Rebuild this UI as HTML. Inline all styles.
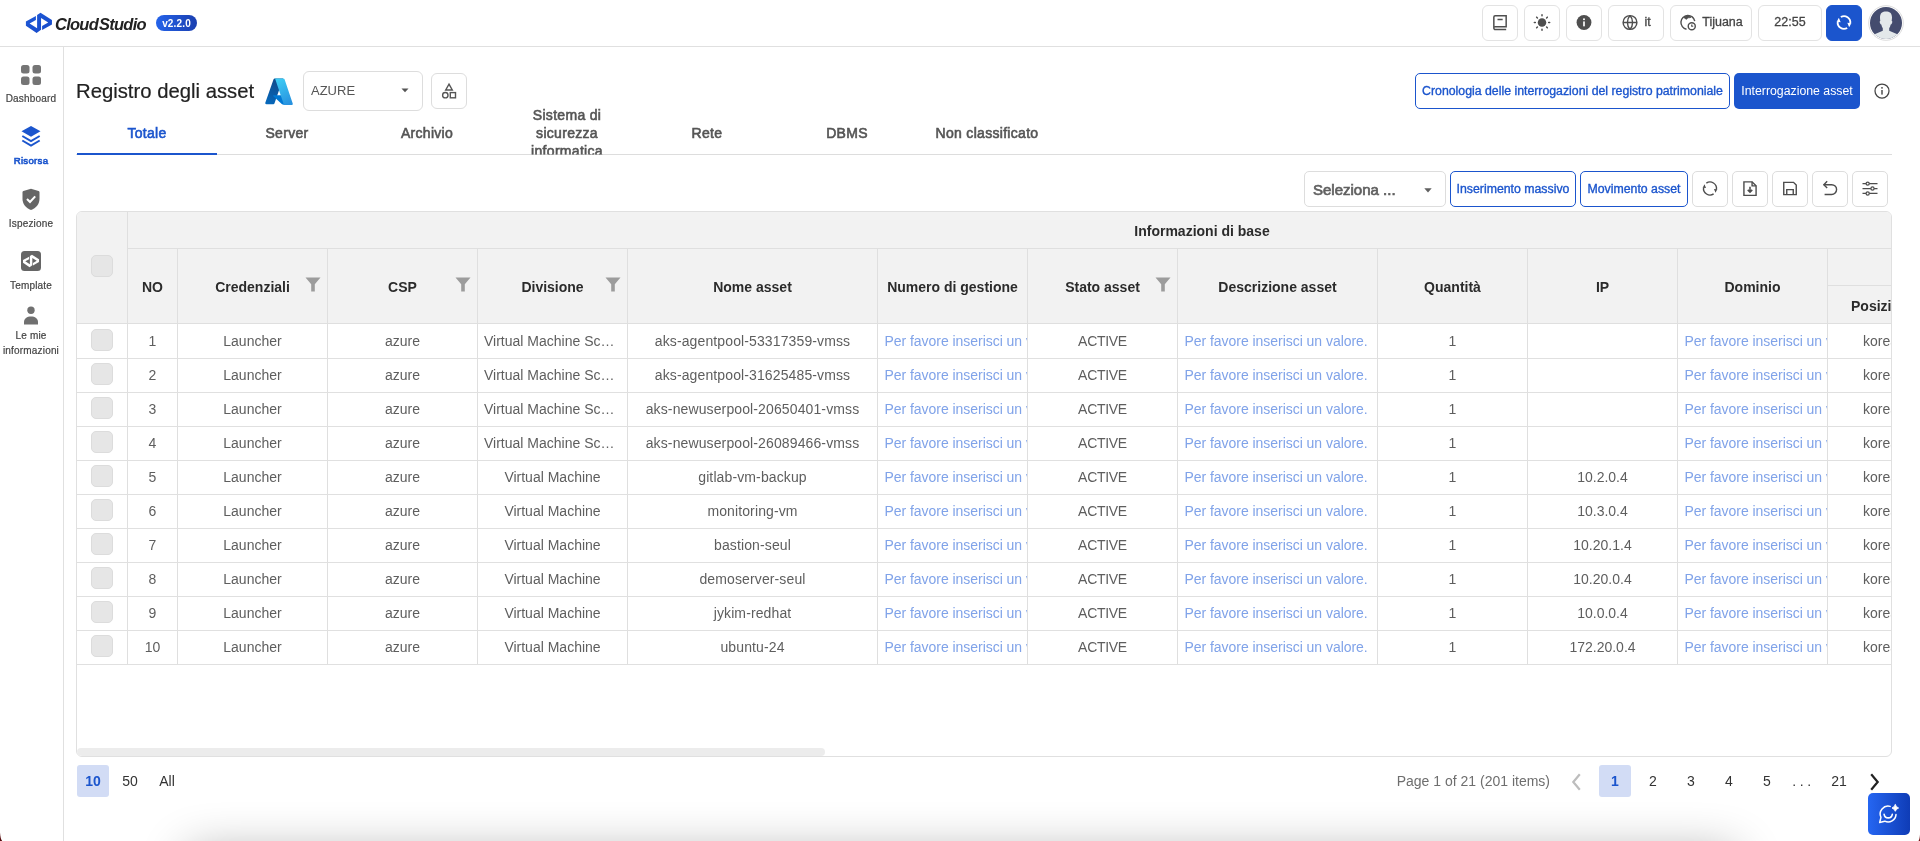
<!DOCTYPE html>
<html lang="it">
<head>
<meta charset="utf-8">
<title>CloudStudio - Registro degli asset</title>
<style>
*{box-sizing:border-box;margin:0;padding:0}
html,body{width:1920px;height:841px;overflow:hidden;background:#fff}
body{font-family:"Liberation Sans",sans-serif;color:#222;position:relative;will-change:transform}
.abs{position:absolute}
#hdr{position:absolute;left:0;top:0;width:1920px;height:47px;border-bottom:1px solid #e0e0e0;background:#fff}
#logo{position:absolute;left:55px;top:13.6px;font-size:16.5px;line-height:20px;font-weight:bold;font-style:italic;color:#222;white-space:nowrap;letter-spacing:-0.75px}
#ver{position:absolute;left:156px;top:15px;width:41px;height:16px;border-radius:8px;background:linear-gradient(90deg,#2463ea,#1a3fb0);color:#fff;font-size:10px;font-weight:bold;text-align:center;line-height:17px;letter-spacing:0.15px}
.hb{position:absolute;top:5px;height:36px;border:1px solid #e3e3e3;border-radius:6px;background:#fff;display:flex;align-items:center;justify-content:center;font-size:12.5px;color:#444;white-space:nowrap}
.hb span{position:relative;top:-1px;-webkit-text-stroke:0.3px currentColor}
.hb svg{transform:translateY(-0.5px)}
#side{position:absolute;left:0;top:47px;width:64px;height:794px;border-right:1px solid #e0e0e0;background:#fff}
.sl{position:absolute;left:0;width:62px;text-align:center;font-size:10px;letter-spacing:0.18px;-webkit-text-stroke:0.2px currentColor;color:#444;line-height:15px;white-space:nowrap}
#title{position:absolute;left:76px;top:78.4px;font-size:20.3px;color:#222;-webkit-text-stroke:0.2px #222;line-height:26px;white-space:nowrap}
.sel{position:absolute;border:1px solid #ddd;background:#fff}
.tab{position:absolute;top:106px;width:140px;height:54px;clip-path:inset(0 0 5.5px 0);text-align:center;font-size:14px;letter-spacing:0.3px;-webkit-text-stroke:0.6px currentColor;color:#555;display:flex;align-items:center;justify-content:center;line-height:18px}
.tb{position:absolute;top:171px;height:36px;border:1px solid #ddd;border-radius:5px;background:#fff;display:flex;align-items:center;justify-content:center}
.tb>svg:not(.abs){transform:translateY(-0.5px)}
.ob{border:1px solid #1b55cd;color:#1b55cd;font-size:12.3px;white-space:nowrap;-webkit-text-stroke:0.35px currentColor}
#grid{position:absolute;left:76px;top:211px;width:1816px;height:546px;border:1px solid #e0e0e0;border-radius:6px;overflow:hidden;background:#fff}
#gh{position:absolute;left:0;top:0;width:1816px;height:112px;background:#f2f2f2}
.vl{position:absolute;width:1px;background:#dfdfdf}
.hl{position:absolute;height:1px;background:#dfdfdf}
.ht{position:absolute;font-weight:bold;font-size:14px;color:#2b2b2b;text-align:center;line-height:18px;white-space:nowrap}
.row{position:absolute;left:0;width:1816px;height:34px;border-bottom:1px solid #e0e0e0}
.c{position:absolute;top:0;height:100%;font-size:14px;color:#5e5e5e;text-align:center;white-space:nowrap;overflow:hidden}
.ph{color:#80a3e9;text-align:left;padding-left:6.5px;letter-spacing:-0.04px}
.cb{position:absolute;left:14px;width:22px;height:22px;border-radius:5px;background:#e6e6e6;border:1px solid #dcdcdc}
.pg{position:absolute;top:765px;height:32px;line-height:32px;border-radius:3px;font-size:14px;color:#333;text-align:center}
</style>
</head>
<body>
<div id="hdr">
<svg class="abs" style="left:0;top:0" width="60" height="46" viewBox="0 0 60 46"><defs><linearGradient id="lg1" x1="0" y1="0" x2="1" y2="1"><stop offset="0" stop-color="#1f5bd8"/><stop offset="1" stop-color="#1748c8"/></linearGradient></defs><path fill="url(#lg1)" d="M25.9 21.4 L35.9 15.9 L35.9 19.95 L29.6 23.4 L37.1 28.15 L37.1 14.95 L40.5 12.8 L51.95 20.1 L51.95 24.4 L42.1 30.1 L42.1 26 L48.2 22.45 L41.05 18 L41.05 29.75 L36.6 33 L25.9 25.65 Z"/></svg>
<div id="logo">Cloud<span style="margin-left:1px">Studio</span></div>
<div id="ver">v2.2.0</div>
<div class="hb" style="left:1482px;width:36px"><svg width="20" height="20" viewBox="0 0 24 24" fill="none" stroke="#4f4f4f" stroke-width="1.800"><path d="M4.600 19.200V5.600A1.600 1.600 0 0 1 6.200 4H19.400v13H6.400A1.700 1.700 0 0 0 4.600 18.700v0A1.700 1.700 0 0 0 6.400 20.400H19.400"/><path d="M9 8.300h6.200" /></svg></div>
<div class="hb" style="left:1524px;width:36px"><svg width="20" height="20" viewBox="0 0 24 24"><circle cx="12" cy="12" r="5.100" fill="#4f4f4f"/><g stroke="#4f4f4f" stroke-width="1.800" stroke-linecap="round"><path d="M12 2.800v1.200M12 20v1.200M2.800 12h1.200M20 12h1.200M5.600 5.600l.9.900M17.500 17.500l.9.900M5.600 18.400l.9-.9M17.500 6.500l.9-.9"/></g></svg></div>
<div class="hb" style="left:1566px;width:36px"><svg width="20" height="20" viewBox="0 0 24 24"><circle cx="12" cy="12" r="8.900" fill="#4f4f4f"/><rect x="11" y="10.700" width="2" height="5.900" fill="#fff"/><circle cx="12" cy="8.100" r="1.200" fill="#fff"/></svg></div>
<div class="hb" style="left:1608px;width:56px"><svg width="18" height="18" viewBox="0 0 24 24" fill="none" stroke="#4f4f4f" stroke-width="1.900"><circle cx="12" cy="12" r="9.200"/><path d="M2.800 12h18.400M12 2.800c-4.600 5-4.600 13.400 0 18.400M12 2.800c4.600 5 4.600 13.400 0 18.400"/></svg><span style="margin-left:5px">it</span></div>
<div class="hb" style="left:1670px;width:82px"><svg width="18" height="18" viewBox="0 0 24 24" fill="none" stroke="#4f4f4f" stroke-width="1.900"><path d="M21 10.200A9.300 9.300 0 1 0 10 21"/><path d="M6.500 5.500c1.200 0 1.800 1.800 3 2.200 1.300.3 1.600-1.700 3.200-2 1.300-.3 2.500.2 3.300-.6C14.500 3.600 12.500 3 11.200 3 9.500 3 7.800 3.800 6.500 5.500z" fill="#4f4f4f" stroke-width="1"/><circle cx="17" cy="17" r="4.700"/><path d="M17 14.600V17h2" stroke-width="1.600"/></svg><span style="margin-left:5px">Tijuana</span></div>
<div class="hb" style="left:1758px;width:64px"><span>22:55</span></div>
<div class="hb" style="left:1826px;width:36px;background:#1b55cd;border-color:#1b55cd"><svg width="20" height="20" viewBox="0 0 24 24"><path d="M8.20 5.42 A7.60 7.60 0 0 1 19.53 13.06 M15.80 18.58 A7.60 7.60 0 0 1 4.47 10.94" fill="none" stroke="#fff" stroke-width="2.200"/><path d="M15.98 12.42 L20.75 12.92 L18.18 17.57 Z M8.02 11.58 L3.25 11.08 L5.82 6.43 Z" fill="#fff"/></svg></div>
<svg class="abs" style="left:1868px;top:5px" width="36" height="36" viewBox="0 0 36 36"><defs><clipPath id="avc"><circle cx="18" cy="18" r="16"/></clipPath></defs><circle cx="18" cy="18" r="17.300" fill="#fff" stroke="#dcdcdc" stroke-width="1"/><circle cx="18" cy="18" r="16" fill="#444c6e"/><g clip-path="url(#avc)" fill="#e3e8ea"><path d="M12 12.500C12 8 14.500 6.500 18 6.500S24 8 24 12.500c0 1.500-.3 3-.3 3.500.7 0 .8 1 .3 2.200-.4 1-1 1.200-1.300 1.200-.3 1.500-1 3-1.500 3.800v2.500L30 29.500V36H6v-6.500l8.800-3.800v-2.500c-.5-.8-1.200-2.300-1.500-3.800-.3 0-.9-.2-1.300-1.200-.5-1.200-.4-2.200.3-2.200 0-.5-.3-2-.3-3.500z"/></g></svg>
</div>
<div id="side">
<svg class="abs" style="left:21px;top:18px" width="20" height="20" viewBox="0 0 20 20" fill="#757575"><rect x="0" y="0" width="8.500" height="8.500" rx="2.500"/><rect x="11.500" y="0" width="8.500" height="8.500" rx="2.500"/><rect x="0" y="11.500" width="8.500" height="8.500" rx="2.500"/><rect x="11.500" y="11.500" width="8.500" height="8.500" rx="2.500"/></svg>
<div class="sl" style="top:44px">Dashboard</div>
<svg class="abs" style="left:20px;top:78px" width="22" height="23" viewBox="0 0 22 23"><path d="M11 1 L20.500 6.200 L11 11.800 L1.500 6.200 Z" fill="#1b55cd"/><path d="M2.300 11 L11 16 L19.700 11 M2.300 15.500 L11 20.500 L19.700 15.500" fill="none" stroke="#1b55cd" stroke-width="2"/></svg>
<div class="sl" style="top:106px;color:#1b55cd;font-size:9.600px;letter-spacing:0.300px;-webkit-text-stroke:0.600px #1b55cd">Risorsa</div>
<svg class="abs" style="left:21px;top:141px" width="20" height="23" viewBox="0 0 20 23"><path d="M10 0.700 L17.600 2.900 Q18.500 3.200 18.500 4.100 V11 C18.500 16 15 20 10 22 C5 20 1.500 16 1.500 11 V4.100 Q1.500 3.200 2.400 2.900 Z" fill="#666"/><path d="M6 11 L9 14 L14.200 8.300" fill="none" stroke="#fff" stroke-width="2"/></svg>
<div class="sl" style="top:168.500px">Ispezione</div>
<svg class="abs" style="left:21px;top:204px" width="20" height="20" viewBox="0 0 20 20"><rect x="0" y="0" width="20" height="20" rx="3.500" fill="#666"/><g transform="translate(10 10) scale(0.615) translate(-38.900 -22.900)"><path fill="#fff" d="M25.900 21.400 L35.900 15.900 L35.900 19.950 L29.600 23.400 L37.100 28.150 L37.100 14.950 L40.500 12.800 L51.950 20.100 L51.950 24.400 L42.100 30.100 L42.100 26 L48.200 22.450 L41.050 18 L41.050 29.750 L36.600 33 L25.900 25.650 Z"/></g></svg>
<div class="sl" style="top:230.800px">Template</div>
<svg class="abs" style="left:23px;top:258.700px" width="16" height="19" viewBox="0 0 16 19" fill="#707070"><circle cx="8" cy="4.200" r="3.700"/><path d="M1 18.500 V16 C1 12.500 4 10.500 8 10.500 S15 12.500 15 16 V18.500 Z"/></svg>
<div class="sl" style="top:280.700px">Le mie<br>informazioni</div>
</div>
<div id="title">Registro degli asset</div>
<svg class="abs" style="left:264.500px;top:77.500px" width="28.900" height="27" viewBox="0 0 30 28"><defs><linearGradient id="az1" x1="0.500" y1="0" x2="0.200" y2="1"><stop offset="0" stop-color="#114a8b"/><stop offset="1" stop-color="#0669bc"/></linearGradient><linearGradient id="az2" x1="0.300" y1="0" x2="0.700" y2="1"><stop offset="0" stop-color="#3ccbf4"/><stop offset="1" stop-color="#2892df"/></linearGradient></defs><path d="M10.200 0.500 H18.800 L9.900 26.300 a1.400 1.400 0 0 1 -1.300 0.900 H1.700 a1.400 1.400 0 0 1 -1.300 -1.800 L8.900 1.400 a1.400 1.400 0 0 1 1.300 -0.900z" fill="url(#az1)"/><path d="M22.700 17.800 H9.100 a0.600 0.600 0 0 0 -0.400 1.100 l8.700 8.100 a1.400 1.400 0 0 0 0.900 0.400 h7.700z" fill="#0078d4"/><path d="M20.300 1.400 a1.400 1.400 0 0 0 -1.300 -0.900 H9.400 a1.400 1.400 0 0 1 1.300 0.900 l8.400 24.900 a1.400 1.400 0 0 1 -1.300 1.800 h9.600 a1.400 1.400 0 0 0 1.300 -1.800z" fill="url(#az2)"/></svg>
<div class="sel" style="left:303px;top:71px;width:120px;height:40px;border-radius:6px"><span style="position:absolute;left:7px;top:0;line-height:38px;font-size:13px;color:#555">AZURE</span><svg class="abs" style="left:97px;top:16px" width="8" height="5" viewBox="0 0 8 5"><path d="M0.500 0.500 L4 4.300 L7.500 0.500 Z" fill="#555"/></svg></div>
<div class="sel" style="left:431px;top:73px;width:36px;height:36px;border-radius:6px"><svg class="abs" style="left:8.200px;top:8px" width="18" height="18" viewBox="0 0 18 18" fill="none" stroke="#555" stroke-width="1.400"><path d="M9 2.200 L12.300 8 H5.700 Z"/><circle cx="5.300" cy="13.200" r="2.700"/><rect x="10.300" y="10.600" width="5.200" height="5.200"/></svg></div>
<div class="ob abs" style="left:1415px;top:73px;width:315px;height:36px;line-height:34px;border-radius:5px;text-align:center;font-size:12.300px">Cronologia delle interrogazioni del registro patrimoniale</div>
<div class="abs" style="left:1734px;top:73px;width:126px;height:36px;line-height:36px;border-radius:5px;text-align:center;font-size:12.300px;background:#1b55cd;color:#fff;white-space:nowrap">Interrogazione asset</div>
<svg class="abs" style="left:1873px;top:82px" width="18" height="18" viewBox="0 0 18 18"><circle cx="9" cy="9" r="7" fill="none" stroke="#444" stroke-width="1.250"/><rect x="8.300" y="8" width="1.400" height="4.600" fill="#444"/><circle cx="9" cy="5.800" r="0.900" fill="#444"/></svg>
<div class="abs" style="left:76px;top:154px;width:1816px;height:1px;background:#ddd"></div>
<div class="tab" style="left:77px;color:#1b55cd;">Totale</div>
<div class="tab" style="left:217px;">Server</div>
<div class="tab" style="left:357px;">Archivio</div>
<div class="tab" style="left:497px;">Sistema di<br>sicurezza<br>informatica</div>
<div class="tab" style="left:637px;">Rete</div>
<div class="tab" style="left:777px;">DBMS</div>
<div class="tab" style="left:917px;">Non classificato</div>
<div class="abs" style="left:77px;top:153px;width:140px;height:2px;background:#1b55cd"></div>
<div class="tb" style="left:1304px;width:142px;justify-content:flex-start"><span style="margin-left:8px;font-size:15px;color:#606060;-webkit-text-stroke:0.7px currentColor">Seleziona ...</span><svg class="abs" style="left:119px;top:15.500px" width="8" height="5" viewBox="0 0 8 5"><path d="M0.300 0.300 L4 4.500 L7.700 0.300 Z" fill="#606060"/></svg></div>
<div class="tb ob" style="left:1450px;width:126px">Inserimento massivo</div>
<div class="tb ob" style="left:1580px;width:108px">Movimento asset</div>
<div class="tb" style="left:1692px;width:36px"><svg width="20" height="20" viewBox="0 0 24 24"><path d="M7.64 5.53 A7.80 7.80 0 0 1 19.72 13.09 M16.36 18.47 A7.80 7.80 0 0 1 4.28 10.91" fill="none" stroke="#4d4d4d" stroke-width="1.700"/><path d="M16.77 12.50 L20.75 12.92 L18.62 17.17 Z M7.23 11.50 L3.25 11.08 L5.38 6.83 Z" fill="#4d4d4d"/></svg></div>
<div class="tb" style="left:1732px;width:36px"><svg width="20" height="20" viewBox="0 0 24 24" fill="none" stroke="#4d4d4d" stroke-width="1.700"><path d="M4.700 4h9.800l4.800 4.800v11.400H4.700z"/><path d="M14.500 4v4.800h4.800"/><path d="M12 9.800v6.400M9.300 13.700l2.700 2.700 2.700-2.700" stroke-width="1.900"/></svg></div>
<div class="tb" style="left:1772px;width:36px"><svg width="20" height="20" viewBox="0 0 24 24" fill="none" stroke="#4d4d4d" stroke-width="1.700"><path d="M4.500 4.600h11.700l3.300 3.300v11.400h-15z"/><path d="M8.100 19.300v-6h7.800v6"/></svg></div>
<div class="tb" style="left:1812px;width:36px"><svg width="20" height="20" viewBox="0 0 24 24" fill="none" stroke="#4d4d4d" stroke-width="1.700"><path d="M8.600 3.400L4.600 7.400l4 4"/><path d="M4.600 7.400H14a5.900 5.900 0 0 1 0 11.800H5.500"/></svg></div>
<div class="tb" style="left:1852px;width:36px"><svg width="20" height="20" viewBox="0 0 24 24" fill="none" stroke="#4d4d4d" stroke-width="1.500"><path d="M3 6.100h18M3 12h18M3 17.900h18"/><circle cx="9.200" cy="6.100" r="1.900" fill="#fff"/><circle cx="15" cy="12" r="1.900" fill="#fff"/><circle cx="9.200" cy="17.900" r="1.900" fill="#fff"/></svg></div>
<div id="grid">
<div id="gh"></div>
<div class="hl" style="left:50px;top:36px;width:1800px"></div>
<div class="hl" style="left:1750px;top:73px;width:100px"></div>
<div class="hl" style="left:0;top:111px;width:1816px"></div>
<div class="vl" style="left:50px;top:0;height:453px"></div>
<div class="vl" style="left:100px;top:37px;height:416px"></div>
<div class="vl" style="left:250px;top:37px;height:416px"></div>
<div class="vl" style="left:400px;top:37px;height:416px"></div>
<div class="vl" style="left:550px;top:37px;height:416px"></div>
<div class="vl" style="left:800px;top:37px;height:416px"></div>
<div class="vl" style="left:950px;top:37px;height:416px"></div>
<div class="vl" style="left:1100px;top:37px;height:416px"></div>
<div class="vl" style="left:1300px;top:37px;height:416px"></div>
<div class="vl" style="left:1450px;top:37px;height:416px"></div>
<div class="vl" style="left:1600px;top:37px;height:416px"></div>
<div class="vl" style="left:1750px;top:37px;height:416px"></div>
<div class="ht" style="left:1025px;top:10px;width:200px">Informazioni di base</div>
<div class="ht" style="left:51px;top:66px;width:49px">NO</div>
<div class="ht" style="left:101px;top:66px;width:149px">Credenziali</div>
<svg class="abs" style="left:228px;top:64.5px" width="16" height="15" viewBox="0 0 16 15"><path d="M0.500 0.500 H15.500 L9.800 7.200 V14.500 H6.200 V7.200 Z" fill="#9c9c9c"/></svg>
<div class="ht" style="left:251px;top:66px;width:149px">CSP</div>
<svg class="abs" style="left:378px;top:64.5px" width="16" height="15" viewBox="0 0 16 15"><path d="M0.500 0.500 H15.500 L9.800 7.200 V14.500 H6.200 V7.200 Z" fill="#9c9c9c"/></svg>
<div class="ht" style="left:401px;top:66px;width:149px">Divisione</div>
<svg class="abs" style="left:528px;top:64.5px" width="16" height="15" viewBox="0 0 16 15"><path d="M0.500 0.500 H15.500 L9.800 7.200 V14.500 H6.200 V7.200 Z" fill="#9c9c9c"/></svg>
<div class="ht" style="left:551px;top:66px;width:249px">Nome asset</div>
<div class="ht" style="left:801px;top:66px;width:149px">Numero di gestione</div>
<div class="ht" style="left:951px;top:66px;width:149px">Stato asset</div>
<svg class="abs" style="left:1078px;top:64.5px" width="16" height="15" viewBox="0 0 16 15"><path d="M0.500 0.500 H15.500 L9.800 7.200 V14.500 H6.200 V7.200 Z" fill="#9c9c9c"/></svg>
<div class="ht" style="left:1101px;top:66px;width:199px">Descrizione asset</div>
<div class="ht" style="left:1301px;top:66px;width:149px">Quantità</div>
<div class="ht" style="left:1451px;top:66px;width:149px">IP</div>
<div class="ht" style="left:1601px;top:66px;width:149px">Dominio</div>
<div class="ht" style="left:1774px;top:85px;text-align:left">Posizione</div>
<div class="cb" style="top:43px"></div>
<div class="row" style="top:112px;height:35px;line-height:34px">
<div class="cb" style="top:5px"></div>
<div class="c" style="left:51px;width:49px;">1</div>
<div class="c" style="left:101px;width:149px;">Launcher</div>
<div class="c" style="left:251px;width:149px;">azure</div>
<div class="c" style="left:401px;width:149px;text-align:left;padding-left:6px">Virtual Machine Sc…</div>
<div class="c" style="left:551px;width:249px;letter-spacing:0.12px">aks-agentpool-53317359-vmss</div>
<div class="c ph" style="left:801px;width:149px;">Per favore inserisci un valore.</div>
<div class="c" style="left:951px;width:149px;letter-spacing:-0.300px">ACTIVE</div>
<div class="c ph" style="left:1101px;width:199px;">Per favore inserisci un valore.</div>
<div class="c" style="left:1301px;width:149px;">1</div>
<div class="c" style="left:1451px;width:149px;"></div>
<div class="c ph" style="left:1601px;width:149px;">Per favore inserisci un valore.</div>
<div class="c" style="left:1751px;width:100px;text-align:left;padding-left:35px">korea central</div>
</div>
<div class="row" style="top:147px;height:34px;line-height:33px">
<div class="cb" style="top:4px"></div>
<div class="c" style="left:51px;width:49px;">2</div>
<div class="c" style="left:101px;width:149px;">Launcher</div>
<div class="c" style="left:251px;width:149px;">azure</div>
<div class="c" style="left:401px;width:149px;text-align:left;padding-left:6px">Virtual Machine Sc…</div>
<div class="c" style="left:551px;width:249px;letter-spacing:0.12px">aks-agentpool-31625485-vmss</div>
<div class="c ph" style="left:801px;width:149px;">Per favore inserisci un valore.</div>
<div class="c" style="left:951px;width:149px;letter-spacing:-0.300px">ACTIVE</div>
<div class="c ph" style="left:1101px;width:199px;">Per favore inserisci un valore.</div>
<div class="c" style="left:1301px;width:149px;">1</div>
<div class="c" style="left:1451px;width:149px;"></div>
<div class="c ph" style="left:1601px;width:149px;">Per favore inserisci un valore.</div>
<div class="c" style="left:1751px;width:100px;text-align:left;padding-left:35px">korea central</div>
</div>
<div class="row" style="top:181px;height:34px;line-height:33px">
<div class="cb" style="top:4px"></div>
<div class="c" style="left:51px;width:49px;">3</div>
<div class="c" style="left:101px;width:149px;">Launcher</div>
<div class="c" style="left:251px;width:149px;">azure</div>
<div class="c" style="left:401px;width:149px;text-align:left;padding-left:6px">Virtual Machine Sc…</div>
<div class="c" style="left:551px;width:249px;letter-spacing:0.12px">aks-newuserpool-20650401-vmss</div>
<div class="c ph" style="left:801px;width:149px;">Per favore inserisci un valore.</div>
<div class="c" style="left:951px;width:149px;letter-spacing:-0.300px">ACTIVE</div>
<div class="c ph" style="left:1101px;width:199px;">Per favore inserisci un valore.</div>
<div class="c" style="left:1301px;width:149px;">1</div>
<div class="c" style="left:1451px;width:149px;"></div>
<div class="c ph" style="left:1601px;width:149px;">Per favore inserisci un valore.</div>
<div class="c" style="left:1751px;width:100px;text-align:left;padding-left:35px">korea central</div>
</div>
<div class="row" style="top:215px;height:34px;line-height:33px">
<div class="cb" style="top:4px"></div>
<div class="c" style="left:51px;width:49px;">4</div>
<div class="c" style="left:101px;width:149px;">Launcher</div>
<div class="c" style="left:251px;width:149px;">azure</div>
<div class="c" style="left:401px;width:149px;text-align:left;padding-left:6px">Virtual Machine Sc…</div>
<div class="c" style="left:551px;width:249px;letter-spacing:0.12px">aks-newuserpool-26089466-vmss</div>
<div class="c ph" style="left:801px;width:149px;">Per favore inserisci un valore.</div>
<div class="c" style="left:951px;width:149px;letter-spacing:-0.300px">ACTIVE</div>
<div class="c ph" style="left:1101px;width:199px;">Per favore inserisci un valore.</div>
<div class="c" style="left:1301px;width:149px;">1</div>
<div class="c" style="left:1451px;width:149px;"></div>
<div class="c ph" style="left:1601px;width:149px;">Per favore inserisci un valore.</div>
<div class="c" style="left:1751px;width:100px;text-align:left;padding-left:35px">korea central</div>
</div>
<div class="row" style="top:249px;height:34px;line-height:33px">
<div class="cb" style="top:4px"></div>
<div class="c" style="left:51px;width:49px;">5</div>
<div class="c" style="left:101px;width:149px;">Launcher</div>
<div class="c" style="left:251px;width:149px;">azure</div>
<div class="c" style="left:401px;width:149px;">Virtual Machine</div>
<div class="c" style="left:551px;width:249px;letter-spacing:0.12px">gitlab-vm-backup</div>
<div class="c ph" style="left:801px;width:149px;">Per favore inserisci un valore.</div>
<div class="c" style="left:951px;width:149px;letter-spacing:-0.300px">ACTIVE</div>
<div class="c ph" style="left:1101px;width:199px;">Per favore inserisci un valore.</div>
<div class="c" style="left:1301px;width:149px;">1</div>
<div class="c" style="left:1451px;width:149px;">10.2.0.4</div>
<div class="c ph" style="left:1601px;width:149px;">Per favore inserisci un valore.</div>
<div class="c" style="left:1751px;width:100px;text-align:left;padding-left:35px">korea central</div>
</div>
<div class="row" style="top:283px;height:34px;line-height:33px">
<div class="cb" style="top:4px"></div>
<div class="c" style="left:51px;width:49px;">6</div>
<div class="c" style="left:101px;width:149px;">Launcher</div>
<div class="c" style="left:251px;width:149px;">azure</div>
<div class="c" style="left:401px;width:149px;">Virtual Machine</div>
<div class="c" style="left:551px;width:249px;letter-spacing:0.12px">monitoring-vm</div>
<div class="c ph" style="left:801px;width:149px;">Per favore inserisci un valore.</div>
<div class="c" style="left:951px;width:149px;letter-spacing:-0.300px">ACTIVE</div>
<div class="c ph" style="left:1101px;width:199px;">Per favore inserisci un valore.</div>
<div class="c" style="left:1301px;width:149px;">1</div>
<div class="c" style="left:1451px;width:149px;">10.3.0.4</div>
<div class="c ph" style="left:1601px;width:149px;">Per favore inserisci un valore.</div>
<div class="c" style="left:1751px;width:100px;text-align:left;padding-left:35px">korea central</div>
</div>
<div class="row" style="top:317px;height:34px;line-height:33px">
<div class="cb" style="top:4px"></div>
<div class="c" style="left:51px;width:49px;">7</div>
<div class="c" style="left:101px;width:149px;">Launcher</div>
<div class="c" style="left:251px;width:149px;">azure</div>
<div class="c" style="left:401px;width:149px;">Virtual Machine</div>
<div class="c" style="left:551px;width:249px;letter-spacing:0.12px">bastion-seul</div>
<div class="c ph" style="left:801px;width:149px;">Per favore inserisci un valore.</div>
<div class="c" style="left:951px;width:149px;letter-spacing:-0.300px">ACTIVE</div>
<div class="c ph" style="left:1101px;width:199px;">Per favore inserisci un valore.</div>
<div class="c" style="left:1301px;width:149px;">1</div>
<div class="c" style="left:1451px;width:149px;">10.20.1.4</div>
<div class="c ph" style="left:1601px;width:149px;">Per favore inserisci un valore.</div>
<div class="c" style="left:1751px;width:100px;text-align:left;padding-left:35px">korea central</div>
</div>
<div class="row" style="top:351px;height:34px;line-height:33px">
<div class="cb" style="top:4px"></div>
<div class="c" style="left:51px;width:49px;">8</div>
<div class="c" style="left:101px;width:149px;">Launcher</div>
<div class="c" style="left:251px;width:149px;">azure</div>
<div class="c" style="left:401px;width:149px;">Virtual Machine</div>
<div class="c" style="left:551px;width:249px;letter-spacing:0.12px">demoserver-seul</div>
<div class="c ph" style="left:801px;width:149px;">Per favore inserisci un valore.</div>
<div class="c" style="left:951px;width:149px;letter-spacing:-0.300px">ACTIVE</div>
<div class="c ph" style="left:1101px;width:199px;">Per favore inserisci un valore.</div>
<div class="c" style="left:1301px;width:149px;">1</div>
<div class="c" style="left:1451px;width:149px;">10.20.0.4</div>
<div class="c ph" style="left:1601px;width:149px;">Per favore inserisci un valore.</div>
<div class="c" style="left:1751px;width:100px;text-align:left;padding-left:35px">korea central</div>
</div>
<div class="row" style="top:385px;height:34px;line-height:33px">
<div class="cb" style="top:4px"></div>
<div class="c" style="left:51px;width:49px;">9</div>
<div class="c" style="left:101px;width:149px;">Launcher</div>
<div class="c" style="left:251px;width:149px;">azure</div>
<div class="c" style="left:401px;width:149px;">Virtual Machine</div>
<div class="c" style="left:551px;width:249px;letter-spacing:0.12px">jykim-redhat</div>
<div class="c ph" style="left:801px;width:149px;">Per favore inserisci un valore.</div>
<div class="c" style="left:951px;width:149px;letter-spacing:-0.300px">ACTIVE</div>
<div class="c ph" style="left:1101px;width:199px;">Per favore inserisci un valore.</div>
<div class="c" style="left:1301px;width:149px;">1</div>
<div class="c" style="left:1451px;width:149px;">10.0.0.4</div>
<div class="c ph" style="left:1601px;width:149px;">Per favore inserisci un valore.</div>
<div class="c" style="left:1751px;width:100px;text-align:left;padding-left:35px">korea central</div>
</div>
<div class="row" style="top:419px;height:34px;line-height:33px">
<div class="cb" style="top:4px"></div>
<div class="c" style="left:51px;width:49px;">10</div>
<div class="c" style="left:101px;width:149px;">Launcher</div>
<div class="c" style="left:251px;width:149px;">azure</div>
<div class="c" style="left:401px;width:149px;">Virtual Machine</div>
<div class="c" style="left:551px;width:249px;letter-spacing:0.12px">ubuntu-24</div>
<div class="c ph" style="left:801px;width:149px;">Per favore inserisci un valore.</div>
<div class="c" style="left:951px;width:149px;letter-spacing:-0.300px">ACTIVE</div>
<div class="c ph" style="left:1101px;width:199px;">Per favore inserisci un valore.</div>
<div class="c" style="left:1301px;width:149px;">1</div>
<div class="c" style="left:1451px;width:149px;">172.20.0.4</div>
<div class="c ph" style="left:1601px;width:149px;">Per favore inserisci un valore.</div>
<div class="c" style="left:1751px;width:100px;text-align:left;padding-left:35px">korea central</div>
</div>
<div class="abs" style="left:0;top:536px;width:748px;height:8px;border-radius:4px;background:#ececec"></div>
</div>
<div class="pg" style="left:77px;width:32px;background:#d2dcf5;color:#1b55cd;font-weight:bold">10</div>
<div class="pg" style="left:114px;width:32px">50</div>
<div class="pg" style="left:151px;width:32px">All</div>
<div class="abs" style="left:1390px;top:765px;width:160px;height:32px;line-height:32px;font-size:14px;color:#6e6e6e;text-align:right;white-space:nowrap">Page 1 of 21 (201 items)</div>
<svg class="abs" style="left:1570px;top:773px" width="12" height="18" viewBox="0 0 12 18"><path d="M9.800 1.300 L3.300 9 L9.800 16.700" fill="none" stroke="#bdbdbd" stroke-width="2.200"/></svg>
<div class="pg" style="left:1599px;width:32px;background:#d2dcf5;color:#1b55cd;font-weight:bold">1</div>
<div class="pg" style="left:1637px;width:32px">2</div>
<div class="pg" style="left:1675px;width:32px">3</div>
<div class="pg" style="left:1713px;width:32px">4</div>
<div class="pg" style="left:1751px;width:32px">5</div>
<div class="pg" style="left:1786px;width:32px;letter-spacing:3.600px;text-indent:3px">...</div>
<div class="pg" style="left:1823px;width:32px">21</div>
<svg class="abs" style="left:1868.600px;top:773px" width="12" height="18" viewBox="0 0 12 18"><path d="M2.200 1.300 L8.700 9 L2.200 16.700" fill="none" stroke="#222" stroke-width="2.200"/></svg>
<div class="abs" style="left:1868px;top:793px;width:42px;height:42px;border-radius:5px;background:linear-gradient(90deg,#2566f2,#0f3cb6)"><svg class="abs" style="left:0;top:0" width="42" height="42" viewBox="0 0 42 42" fill="none" stroke="#fff" stroke-width="1.500" stroke-linejoin="round" stroke-linecap="round"><path d="M28 21.600 A7.900 7.900 0 0 1 16.760 28.160 L11.700 29.500 L12.940 24.340 A7.900 7.900 0 0 1 22.140 13.370"/><path d="M16.100 21.400 A4.150 4.150 0 0 0 24.300 21.400" stroke-width="1.600"/><path d="M27.300 11.700 Q28.100 14.200 30.600 15 Q28.100 15.800 27.300 18.300 Q26.500 15.800 24 15 Q26.500 14.200 27.300 11.700Z" fill="#fff" stroke-width="0.900"/></svg></div>
<div class="abs" style="left:188px;top:852px;width:1547px;height:60px;box-shadow:0 0 48px rgba(0,0,0,0.320)"></div>
<svg class="abs" style="left:0;top:829px" width="6" height="12" viewBox="0 0 6 12"><path d="M0 3.500 V12 H2.200 C1 10.500 0.300 8 0 3.500Z" fill="#55090c"/></svg>
<svg class="abs" style="left:1914px;top:829px" width="6" height="12" viewBox="0 0 6 12"><path d="M6 5.500 V12 H4.500 C5.400 10.500 5.800 8.500 6 5.500Z" fill="#7a1518"/></svg>
</body>
</html>
